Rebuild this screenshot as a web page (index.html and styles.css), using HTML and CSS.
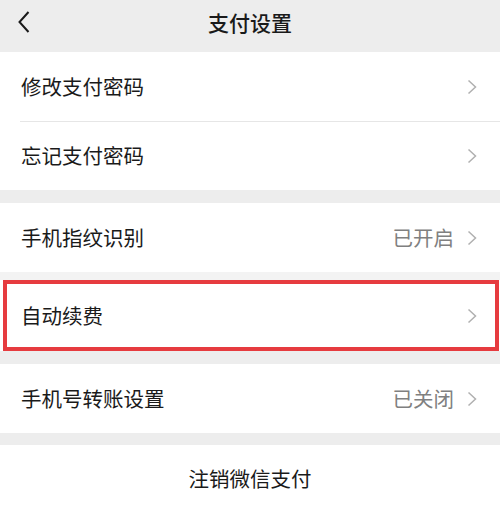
FILE: index.html
```html
<!DOCTYPE html>
<html lang="zh-CN">
<head>
<meta charset="utf-8">
<title>支付设置</title>
<link rel="stylesheet" href="styles.css">
</head>
<body>
<div class="page">
  <header class="nav">
    <span class="back">
      <svg width="14" height="24" viewBox="0 0 14 24"><path d="M11.5 2 L2.5 12 L11.5 22" fill="none" stroke="#1a1a1a" stroke-width="2"/></svg>
    </span>
    <h1 class="title">支付设置</h1>
  </header>

  <section class="group">
    <div class="row"><span class="label">修改支付密码</span><span class="right"><svg class="chev" width="10" height="16" viewBox="0 0 10 16"><path d="M1.5 1.5 L8.5 8 L1.5 14.5" fill="none" stroke="#b0b0b0" stroke-width="1.5"/></svg></span></div>
    <div class="row sep"><span class="label">忘记支付密码</span><span class="right"><svg class="chev" width="10" height="16" viewBox="0 0 10 16"><path d="M1.5 1.5 L8.5 8 L1.5 14.5" fill="none" stroke="#b0b0b0" stroke-width="1.5"/></svg></span></div>
  </section>

  <div class="gap"></div>
  <section class="group">
    <div class="row"><span class="label">手机指纹识别</span><span class="right"><span class="value">已开启</span><svg class="chev" width="10" height="16" viewBox="0 0 10 16"><path d="M1.5 1.5 L8.5 8 L1.5 14.5" fill="none" stroke="#b0b0b0" stroke-width="1.5"/></svg></span></div>
  </section>
  <div class="gap small"></div>
  <section class="group">
    <div class="row highlight"><span class="label">自动续费</span><span class="right"><svg class="chev" width="10" height="16" viewBox="0 0 10 16"><path d="M1.5 1.5 L8.5 8 L1.5 14.5" fill="none" stroke="#b0b0b0" stroke-width="1.5"/></svg></span></div>
  </section>
  <div class="gap"></div>
  <section class="group">
    <div class="row"><span class="label">手机号转账设置</span><span class="right"><span class="value">已关闭</span><svg class="chev" width="10" height="16" viewBox="0 0 10 16"><path d="M1.5 1.5 L8.5 8 L1.5 14.5" fill="none" stroke="#b0b0b0" stroke-width="1.5"/></svg></span></div>
  </section>
  <div class="gap last"></div>
  <section class="group grow">
    <div class="button">注销微信支付</div>
  </section>
</div>
</body>
</html>
```

FILE: styles.css
```css
html, body {
  margin: 0;
  padding: 0;
  background: #ededed;
}
body {
  font-family: "Noto Sans CJK SC", "Noto Sans", sans-serif;
  color: #1a1a1a;
}
.page {
  width: 500px;
  height: 511px;
  overflow: hidden;
  display: flex;
  flex-direction: column;
}
.nav {
  height: 52px;
  flex: none;
  display: flex;
  align-items: center;
  justify-content: center;
  position: relative;
  background: #ededed;
}
.back {
  position: absolute;
  left: 17px;
  top: 10px;
  display: flex;
}
.title {
  margin: 0;
  margin-top: -9px;
  font-size: 21px;
  font-weight: 500;
  color: #1a1a1a;
}
.group {
  background: #fff;
  flex: none;
}
.group.grow {
  flex: 1 0 auto;
}
.row {
  height: 69px;
  display: flex;
  align-items: center;
  justify-content: space-between;
  padding: 0 23px 0 21px;
  position: relative;
}
.row.sep::before {
  content: "";
  position: absolute;
  left: 20px;
  right: 0;
  top: 0;
  height: 1px;
  background: #e6e6e6;
}
.label {
  font-size: 20.5px;
  line-height: 1;
  margin-top: 0;
}
.right {
  display: flex;
  align-items: center;
  gap: 13px;
}
.value {
  font-size: 20.5px;
  line-height: 1;
  color: #808080;
  margin-top: 0;
}
.chev {
  display: block;
  margin-top: 0;
}
.gap {
  height: 13px;
  flex: none;
}
.gap.small {
  height: 8px;
  background: #f3f3f3;
}
.gap.last {
  height: 12px;
}
.row.highlight {
  height: 63px;
  border: 4px solid #e63b3f;
  margin: 0 1px 0 3px;
  padding: 0 18px 0 14px;
}
.button {
  height: 66px;
  display: flex;
  align-items: center;
  justify-content: center;
  font-size: 20.5px;
}
```
